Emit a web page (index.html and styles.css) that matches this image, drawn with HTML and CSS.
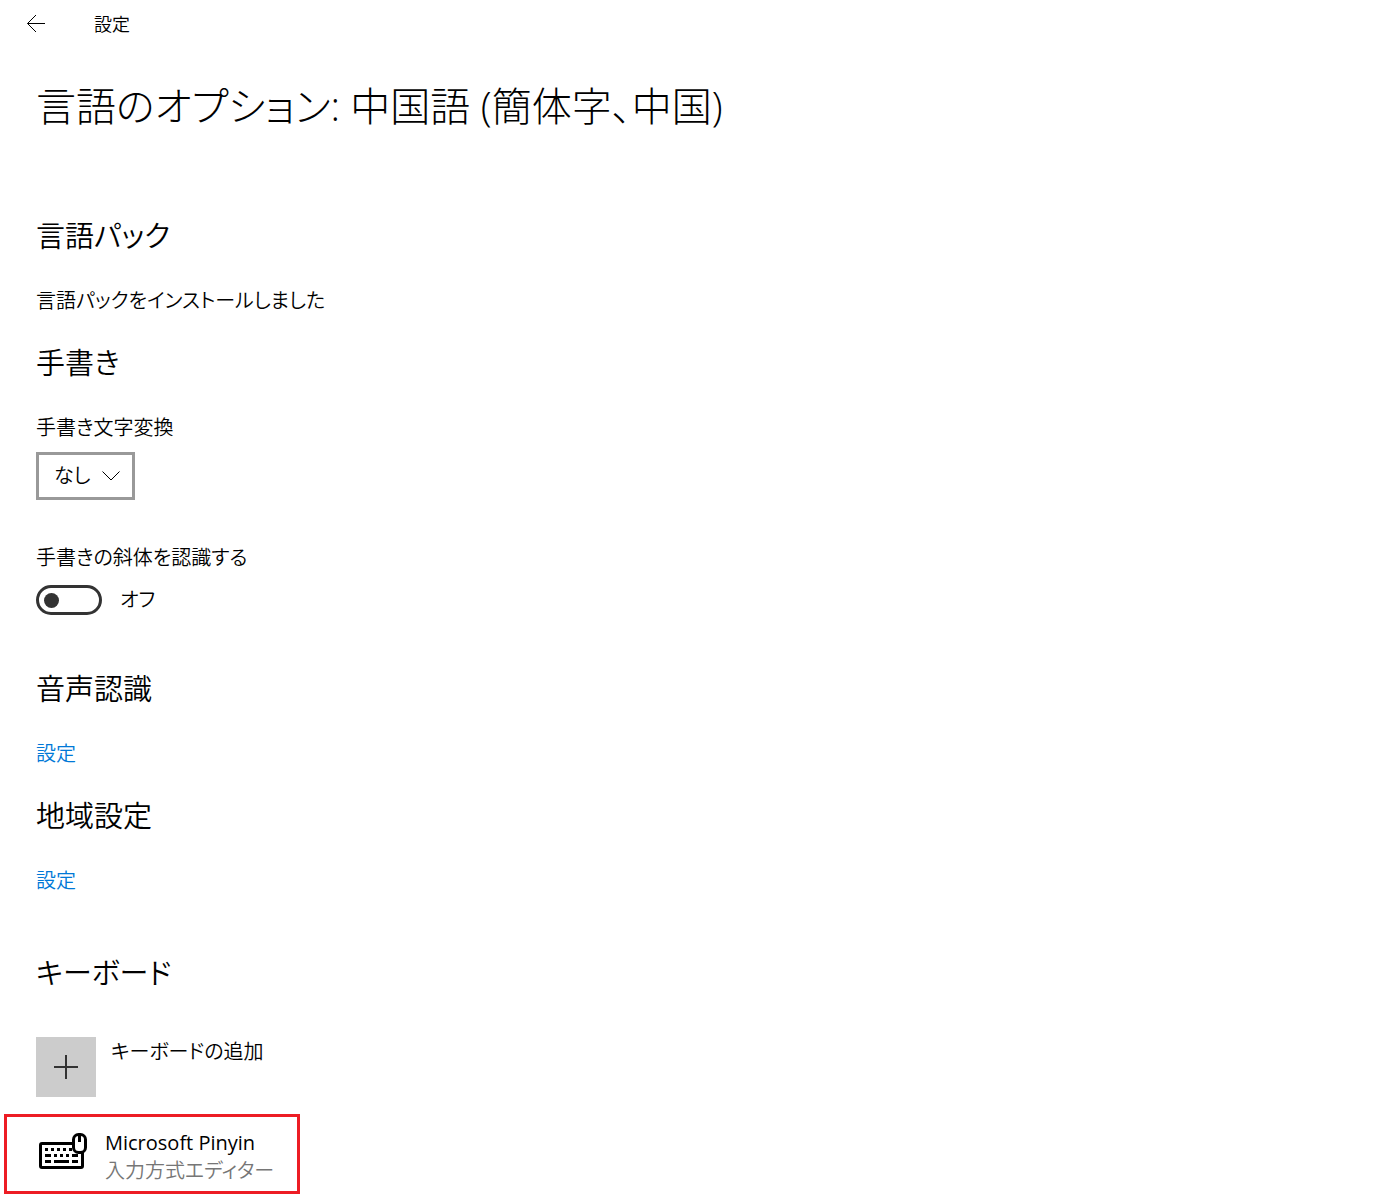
FILE: index.html
```
<!DOCTYPE html>
<html lang="ja">
<head>
    <meta charset="UTF-8">
    <meta name="viewport" content="width=device-width, initial-scale=1.0">
    <title>設定</title>
    <link rel="stylesheet" href="styles.css">
</head>
<body>
    <header class="titlebar">
        <button class="back" type="button" aria-label="戻る">
            <svg width="20" height="20" viewBox="0 0 20 20"><path d="M19 9.5H1.5M10 1L1.5 9.5L10 18"/></svg>
        </button>
        <span class="app-name">設定</span>
    </header>

    <main class="content">
        <h1>言語のオプション: 中国語 (簡体字、中国)</h1>

        <section>
            <h2>言語パック</h2>
            <p>言語パックをインストールしました</p>
        </section>

        <section class="handwriting">
            <h2>手書き</h2>
            <label for="recognition">手書き文字変換</label>
            <div class="select-box">
                <select id="recognition">
                    <option>なし</option>
                </select>
                <svg class="chevron" width="20" height="12" viewBox="0 0 20 12"><path d="M1.5 1.5L10 10L18.5 1.5"/></svg>
            </div>
            <label for="italic">手書きの斜体を認識する</label>
            <div class="toggle-row">
                <input type="checkbox" role="switch" id="italic" class="toggle">
                <span>オフ</span>
            </div>
        </section>

        <section>
            <h2>音声認識</h2>
            <a href="#">設定</a>
        </section>

        <section class="region">
            <h2>地域設定</h2>
            <a href="#">設定</a>
        </section>

        <section class="keyboards">
            <h2>キーボード</h2>
            <button class="add-keyboard" type="button">
                <span class="plus">
                    <svg width="24" height="24" viewBox="0 0 24 24"><path d="M12 0V24M0 12H24"/></svg>
                </span>
                <span>キーボードの追加</span>
            </button>
            <button class="keyboard-item" type="button">
                <svg width="48" height="36" viewBox="0 0 48 36">
                    <rect class="line" x="1.5" y="10.5" width="42" height="24" rx="1.5"/>
                    <path class="keys" d="M6 16.5h3M12 16.5h3M18 16.5h3M24 16.5h3M30 16.5h3M6 22.5h6M15 22.5h3M21 22.5h3M27 22.5h3M33 22.5h6M6 28.5h6M15 28.5h15M33 28.5h6"/>
                    <rect class="line mouse" x="34.5" y="1.5" width="12" height="18" rx="5"/>
                    <path class="line" d="M40.5 3V9"/>
                </svg>
                <span class="item-text">
                    <span class="item-name">Microsoft Pinyin</span>
                    <span class="item-kind">入力方式エディター</span>
                </span>
            </button>
        </section>
    </main>
</body>
</html>
```
FILE: styles.css
```
* {
    box-sizing: border-box;
}

body {
    margin: 0;
    background: #fff;
    color: #000;
    font-family: "Open Sans", "Noto Sans CJK JP", sans-serif;
    font-size: 20px;
    font-weight: 350;
    line-height: 30px;
    font-feature-settings: "palt";
}

button,
select {
    font: inherit;
    font-feature-settings: inherit;
    color: inherit;
    background: none;
    border: none;
    padding: 0;
}

svg {
    display: block;
    fill: none;
    stroke: #000;
}

/* タイトルバー */
.titlebar {
    display: flex;
    align-items: center;
    gap: 48px;
    height: 48px;
    padding-left: 26px;
}

.app-name {
    font-size: 18px;
}

/* 本文 */
.content {
    padding: 28px 36px 9px;
}

h1 {
    margin: 0 0 80px;
    font-size: 40px;
    font-weight: 300;
    line-height: 60px;
}

h2 {
    margin: 0 0 30px;
    font-size: 29px;
    font-weight: 350;
    line-height: 40px;
}

section {
    margin-bottom: 27px;
}

p {
    margin: 0;
}

label,
section > a {
    display: block;
}

a {
    color: #0078d7;
    text-decoration: none;
}

/* 手書き */
.handwriting {
    margin-bottom: 54px;
}

.select-box {
    position: relative;
    width: fit-content;
    margin: 9px 0 43px;
}

.select-box select {
    display: block;
    appearance: none;
    height: 48px;
    padding: 0 41px 0 15px;
    border: 3px solid #999;
    border-radius: 0;
}

.chevron {
    position: absolute;
    top: 18px;
    right: 14px;
    pointer-events: none;
}

.toggle-row {
    display: flex;
    align-items: center;
    gap: 18px;
    margin-top: 12px;
}

.toggle {
    appearance: none;
    display: flex;
    align-items: center;
    width: 66px;
    height: 30px;
    margin: 0;
    padding: 0 5px;
    border: 3px solid #333;
    border-radius: 15px;
}

.toggle::before {
    content: "";
    width: 15px;
    height: 15px;
    border-radius: 50%;
    background: #333;
}

.toggle:checked {
    justify-content: flex-end;
}

/* キーボード */
.region {
    margin-bottom: 57px;
}

.keyboards {
    margin-bottom: 0;
}

.keyboards h2 {
    margin-bottom: 44px;
}

.add-keyboard {
    display: flex;
    gap: 15px;
    margin-bottom: 17px;
}

.plus {
    display: grid;
    place-items: center;
    width: 60px;
    height: 60px;
    background: #ccc;
}

.plus svg {
    stroke: #333;
    stroke-width: 2;
}

/* 選択中のキーボード */
.keyboard-item {
    display: flex;
    gap: 18px;
    height: 80px;
    margin-left: -32px;
    padding: 12px 23px 0 32px;
    border: 3px solid #ed1c24;
    line-height: 28px;
    text-align: left;
}

.keyboard-item svg {
    margin-top: 4px;
    stroke: none;
}

.line {
    stroke: #000;
    stroke-width: 3;
}

.mouse {
    fill: #fff;
}

.keys {
    stroke: #000;
    stroke-width: 3;
}

.item-text {
    display: flex;
    flex-direction: column;
}

.item-name {
    font-weight: 400;
}

.item-kind {
    color: #767676;
}
```
